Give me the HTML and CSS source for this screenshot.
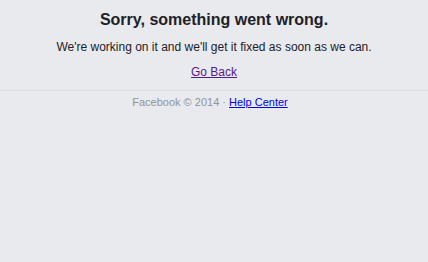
FILE: index.html
```html
<!DOCTYPE html>
<html>
<head>
<meta charset="utf-8">
<link rel="stylesheet" href="styles.css">
</head>
<body>
<div class="main">
  <h1 class="title">Sorry, something went wrong.</h1>
  <p class="msg">We're working on it and we'll get it fixed as soon as we can.</p>
  <p class="back"><a class="visited" href="#">Go Back</a></p>
</div>
<div class="footer">
  <span class="copy">Facebook © 2014 · </span><a class="help" href="#">Help Center</a>
</div>
</body>
</html>
```
FILE: styles.css
```css
html, body {
  margin: 0;
  padding: 0;
  background: #e9eaed;
  font-family: "Liberation Sans", Arial, sans-serif;
}
.main {
  text-align: center;
  padding-top: 10px;
  padding-bottom: 10px;
  border-bottom: 1px solid #dcdee2;
}
.title {
  margin: 0;
  font-size: 16px;
  line-height: 19px;
  font-weight: bold;
  color: #1d2129;
}
.msg {
  margin: 10px 0 0;
  font-size: 12px;
  line-height: 16px;
  color: #1d2129;
}
.back {
  margin: 9px 0 0;
  font-size: 12px;
  line-height: 16px;
}
.visited {
  color: #551a8b;
}
.footer {
  text-align: center;
  padding-top: 4px;
  padding-right: 8px;
  font-size: 11px;
  line-height: 14px;
}
.copy {
  color: #90949c;
}
.help {
  color: #0000ee;
}
```
